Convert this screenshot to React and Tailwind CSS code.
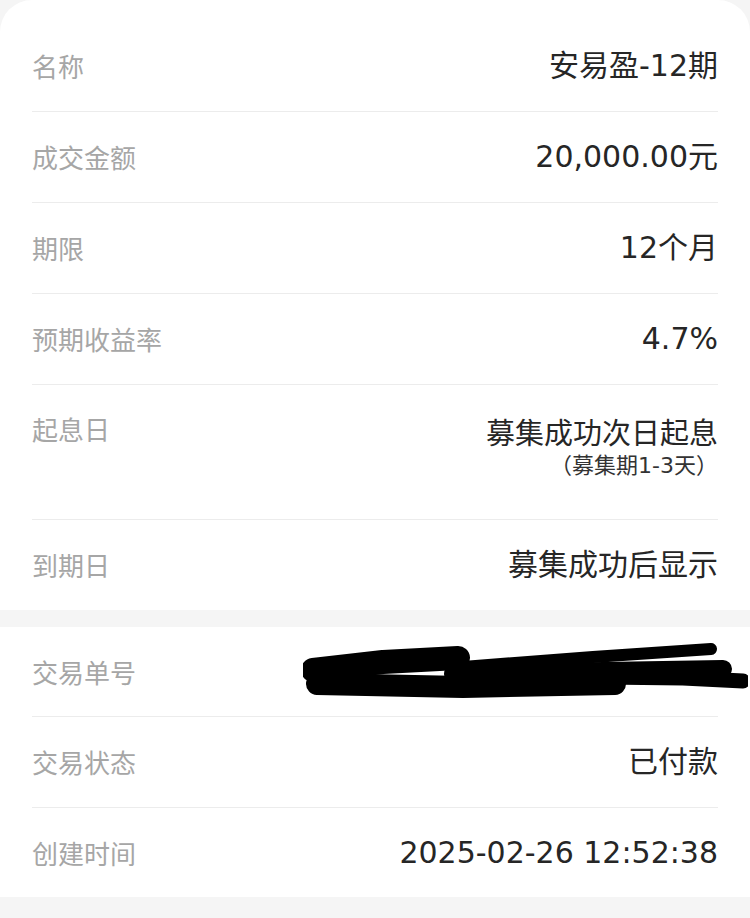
import React from "react";

const labelFont = "font-['Noto_Sans_CJK_SC',sans-serif]";
const valueFont = "font-['DejaVu_Sans','Noto_Sans_CJK_SC',sans-serif]";

const productRows = [
  { label: "名称", value: "安易盈-12期" },
  { label: "成交金额", value: "20,000.00元" },
  { label: "期限", value: "12个月" },
  { label: "预期收益率", value: "4.7%" },
];

// Row: gray label on the left, dark value right-aligned
const Row = ({ label, children, className = "" }) => (
  <div className={`flex items-center justify-between ${className}`}>
    <span className={`${labelFont} text-[26px] leading-[30px] text-[#a6a6a6]`}>{label}</span>
    {children}
  </div>
);

const Value = ({ children }) => (
  <span className={`${valueFont} text-[30px] leading-[36px] text-[#262626]`}>{children}</span>
);

// Scribble that hides the order number
const Redaction = () => (
  <svg width="445" height="60" viewBox="0 0 445 60" className="-mr-[30px] shrink-0">
    <g stroke="#000" strokeLinecap="round" strokeLinejoin="round" fill="none">
      <path d="M10 28 L80 20 L155 16" strokeWidth="24" />
      <path d="M14 42 L160 45 L312 42" strokeWidth="22" />
      <path d="M160 25 L290 15 L408 7" strokeWidth="12" />
      <path d="M150 32 L300 29 L420 27" strokeWidth="18" />
      <path d="M300 35 L380 36 L440 39" strokeWidth="15" />
    </g>
  </svg>
);

export default function App() {
  return (
    <div className="min-h-[918px] w-[750px] bg-[#f5f5f5]">
      {/* Product info card */}
      <div className="rounded-t-[32px] bg-white px-8 pt-[21px]">
        {productRows.map((row) => (
          <Row key={row.label} label={row.label} className="h-[91px] border-b border-[#ececec]">
            <Value>{row.value}</Value>
          </Row>
        ))}

        {/* Interest start date, two lines */}
        <div className="flex h-[135px] items-start justify-between border-b border-[#ececec] pt-[29px]">
          <span className={`${labelFont} text-[26px] leading-[30px] text-[#a6a6a6]`}>起息日</span>
          <div className="mt-[2px] flex flex-col items-end">
            <span className={`${valueFont} text-[29px] leading-[36px] text-[#262626]`}>募集成功次日起息</span>
            <span className={`${valueFont} text-[22px] leading-[28px] text-[#333]`}>（募集期1-3天）</span>
          </div>
        </div>

        <Row label="到期日" className="h-[90px]">
          <Value>募集成功后显示</Value>
        </Row>
      </div>

      {/* Order card */}
      <div className="mt-[17px] bg-white px-8">
        <Row label="交易单号" className="h-[90px] border-b border-[#ececec]">
          <Redaction />
        </Row>
        <Row label="交易状态" className="h-[91px] border-b border-[#ececec]">
          <Value>已付款</Value>
        </Row>
        <Row label="创建时间" className="h-[89px]">
          <Value>2025-02-26 12:52:38</Value>
        </Row>
      </div>
    </div>
  );
}
